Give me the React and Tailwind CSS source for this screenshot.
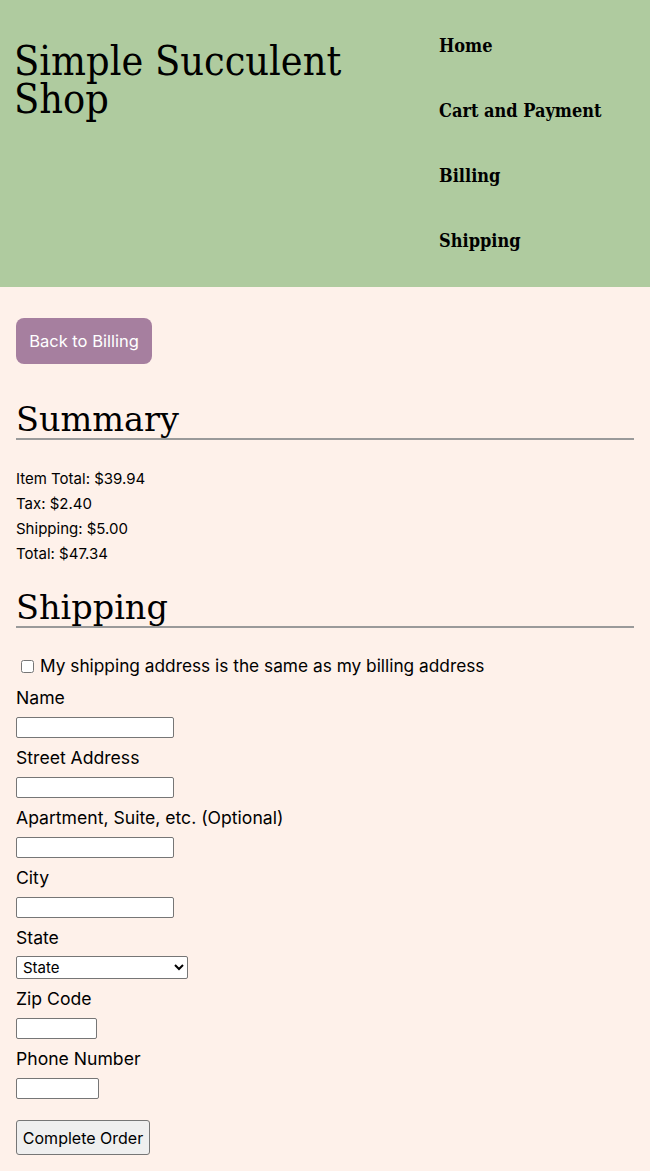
import React from "react";

const serif = "font-['DejaVu_Serif',serif]";
const sans = "font-['Inter',sans-serif]";

function Field({ label, width, select }) {
  return (
    <div className="flex flex-col items-start mb-[7px]">
      <label className="block text-[17.6px] leading-[26px] text-black">{label}</label>
      {select ? (
        <select className="mt-[5px] w-[172px] h-[23px] border border-[#767676] rounded-[2px] bg-white text-[15px] leading-[19px] pl-[2px] text-black appearance-auto">
          <option>State</option>
        </select>
      ) : (
        <input
          type="text"
          className="mt-[6px] h-[21px] border border-[#767676] rounded-[2px] bg-white"
          style={{ width }}
        />
      )}
    </div>
  );
}

export default function App() {
  return (
    <div className={`${sans} min-h-[1171px] bg-[#fef1ea] text-black`}>
      <header className="flex h-[287px] bg-[#afcb9f]">
        <h1 className={`${serif} font-stretch-condensed flex-1 pl-[14px] pr-[60px] pt-[42px] text-[41px] leading-[38px] font-normal`}>
          Simple Succulent Shop
        </h1>
        <nav className={`${serif} font-stretch-condensed w-[211px] pt-[33px] flex flex-col gap-[39px] text-[18px] leading-[26px] font-bold`}>
          <a>Home</a>
          <a>Cart and Payment</a>
          <a>Billing</a>
          <a>Shipping</a>
        </nav>
      </header>

      <main className="px-[16px] pt-[31px] pb-[16px]">
        <button className="w-[136px] h-[46px] rounded-[8px] bg-[#a67f9f] text-white text-[16.5px]">
          Back to Billing
        </button>

        <h2 className={`${serif} mt-[38px] text-[33.5px] leading-[36px] font-normal border-b-2 border-[#9a9a9a]`}>
          Summary
        </h2>
        <div className="mt-[26px] text-[15px] leading-[25px]">
          <p>Item Total: $39.94</p>
          <p>Tax: $2.40</p>
          <p>Shipping: $5.00</p>
          <p>Total: $47.34</p>
        </div>

        <h2 className={`${serif} mt-[24px] text-[33.5px] leading-[36px] font-normal border-b-2 border-[#9a9a9a]`}>
          Shipping
        </h2>

        <div className="mt-[25px] mb-[6px] flex items-center h-[26px] text-[17.3px]">
          <input type="checkbox" className="ml-[5px] mr-[6px] w-[13px] h-[13px]" />
          <span>My shipping address is the same as my billing address</span>
        </div>

        <Field label="Name" width={158} />
        <Field label="Street Address" width={158} />
        <Field label="Apartment, Suite, etc. (Optional)" width={158} />
        <Field label="City" width={158} />
        <Field label="State" select />
        <Field label="Zip Code" width={81} />
        <Field label="Phone Number" width={83} />

        <button className="mt-[14px] w-[134px] h-[35px] bg-[#efefef] border border-[#767676] rounded-[3px] text-[16px]">
          Complete Order
        </button>
      </main>
    </div>
  );
}
